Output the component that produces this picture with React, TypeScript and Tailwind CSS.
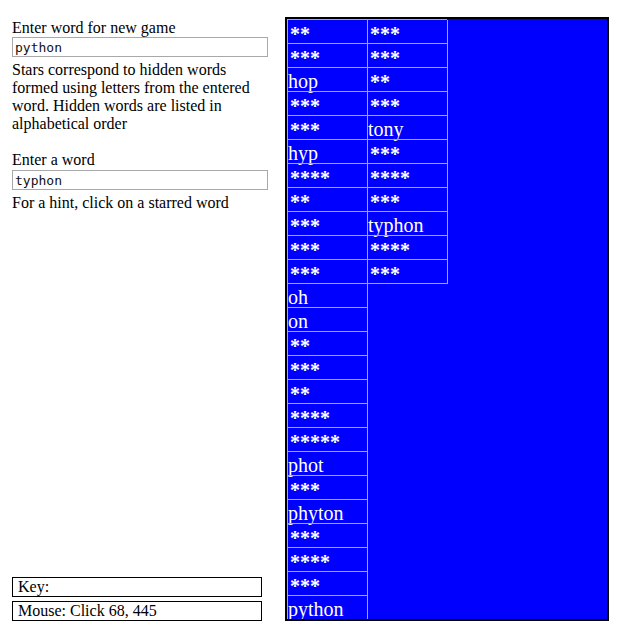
import React from "react";

const words: string[] = [
  "**", "***", "hop", "***", "***", "hyp", "****", "**", "***", "***", "***",
  "oh", "on", "**", "***", "**", "****", "*****", "phot", "***", "phyton", "***", "****", "***", "python",
  "***", "***", "**", "***", "tony", "***", "****", "***", "typhon", "****", "***",
];

function Cell({ w }: { w: string }) {
  const star = w.startsWith("*");
  return (
    <div className="w-[80px] h-[24px] shrink-0 shadow-[inset_1px_1px_0_#a0a0ff,1px_1px_0_#a0a0ff] text-white overflow-visible whitespace-nowrap">
      {star ? (
        <div className="pl-[3px] pt-[4px] text-[20px] leading-[23px] font-bold" style={{ fontFamily: '"Liberation Serif", serif' }}>
          {w}
        </div>
      ) : (
        <div className="pl-[1px] pt-[3px] text-[20px] leading-[23px]" style={{ fontFamily: '"Liberation Serif", serif' }}>
          {w}
        </div>
      )}
    </div>
  );
}

export default function App() {
  return (
    <div className="flex items-start pt-[17px] pl-[12px] h-[636px] bg-white text-black font-['Liberation_Serif',serif] text-[16px]">
      <div className="flex flex-col w-[256px] h-[604px]">
        <div className="mt-[2px] leading-[18px]">Enter word for new game</div>
        <input
          readOnly
          value="python"
          className="mt-0 h-[20px] w-[256px] border border-[#a9a9a9] px-[2px] py-[1px] text-[13px] text-[#111] outline-none font-['DejaVu_Sans_Mono',monospace]"
        />
        <p className="mt-[4px] leading-[18px]">
          Stars correspond to hidden words formed using letters from the entered word. Hidden words are listed in alphabetical order
        </p>
        <div className="mt-[18px] leading-[18px]">Enter a word</div>
        <input
          readOnly
          value="typhon"
          className="mt-[1px] h-[20px] w-[256px] border border-[#a9a9a9] px-[2px] py-[1px] text-[13px] text-[#111] outline-none font-['DejaVu_Sans_Mono',monospace]"
        />
        <div className="mt-[4px] leading-[18px]">For a hint, click on a starred word</div>
        <div className="mt-auto w-[250px] h-[20px] border border-black pl-[5px] leading-[18px]">Key:</div>
        <div className="mt-[4px] w-[250px] h-[20px] border border-black pl-[5px] leading-[18px]">Mouse: Click 68, 445</div>
      </div>
      <div className="ml-[17px] w-[324px] h-[604px] border-2 border-black bg-[#0000ff] overflow-hidden">
        <div className="flex flex-col flex-wrap content-start h-[600px]">
          {words.map((w, i) => (
            <Cell key={i} w={w} />
          ))}
        </div>
      </div>
    </div>
  );
}
